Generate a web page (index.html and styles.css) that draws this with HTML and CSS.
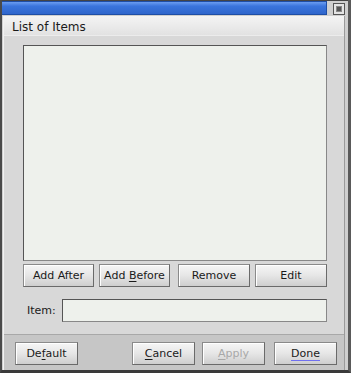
FILE: index.html
```html
<!DOCTYPE html>
<html>
<head>
<meta charset="utf-8">
<link rel="stylesheet" href="styles.css">
</head>
<body>
<div class="window">
  <div class="titlebar">
    <div class="title-blue"></div>
    <div class="close"><span class="close-dot"></span></div>
  </div>
  <div class="frame">
    <div class="header">List of Items</div>
    <div class="main">
      <div class="listbox"></div>
      <div class="btnrow">
        <button class="btn w72">Add After</button>
        <button class="btn w72">Add <u>B</u>efore</button>
        <button class="btn w73 ml8">Remove</button>
        <button class="btn w73">Edit</button>
      </div>
      <div class="itemrow">
        <span class="label">Item:</span>
        <div class="input"></div>
      </div>
    </div>
    <div class="bottombar">
      <button class="btn bb">De<u>f</u>ault</button>
      <div class="spacer"></div>
      <button class="btn bb"><u>C</u>ancel</button>
      <button class="btn bb disabled"><u>A</u>pply</button>
      <button class="btn bb done"><span class="done-text">Done</span></button>
    </div>
  </div>
</div>
</body>
</html>
```

FILE: styles.css
```css
html, body {
  margin: 0;
  padding: 0;
  background: #d4d4d4;
}
.window {
  width: 351px;
  height: 373px;
  box-sizing: border-box;
  background: #cfcfcf;
  border-left: 2px solid #4a4a4a;
  border-right: 3px solid #5a5a5a;
  border-bottom: 3px solid #3a3a3a;
  display: flex;
  flex-direction: column;
  font-family: "DejaVu Sans", sans-serif;
  font-size: 11px;
  color: #1a1a1a;
}
.titlebar {
  height: 16px;
  display: flex;
  align-items: flex-start;
  background: #cfcfcf;
  border-top: 1px solid #444;
  box-sizing: border-box;
}
.title-blue {
  flex: 1;
  height: 14px;
  box-sizing: border-box;
  background: linear-gradient(#6a9cf0, #3a74dc 35%, #2f66cc);
  border: 1px solid #1e4ea6;
  border-left: none;
}
.close {
  width: 12px;
  height: 12px;
  margin: 2px 3px 0 6px;
  box-sizing: border-box;
  border: 1px solid #555;
  background: #e4e4e4;
  display: flex;
  align-items: center;
  justify-content: center;
}
.close-dot {
  width: 4px;
  height: 4px;
  background: #555;
  border: 1px solid #888;
}
.frame {
  flex: 1;
  display: flex;
  flex-direction: column;
  margin-left: 1px;
  margin-right: 3px;
  border-left: 1px solid #f2f2f2;
  border-right: 1px solid #9a9a9a;
}
.header {
  height: 20px;
  box-sizing: border-box;
  padding: 4px 0 0 8px;
  line-height: 14px;
  background: linear-gradient(#f4f4f4, #e2e2e2);
  border-bottom: 1px solid #ececec;
  font-size: 12px;
}
.main {
  flex: 1;
  background: #d8d8d8;
  padding: 9px 17px 0 19px;
  display: flex;
  flex-direction: column;
}
.listbox {
  height: 216px;
  box-sizing: border-box;
  background: #eef1ec;
  border: 1px solid #555;
  border-right-color: #888;
  border-bottom-color: #888;
}
.btnrow {
  display: flex;
  gap: 5px;
  margin-top: 3px;
}
.btn {
  font-family: "DejaVu Sans", sans-serif;
  font-size: 11px;
  color: #1a1a1a;
  height: 23px;
  padding: 0;
  box-sizing: border-box;
  border: 1px solid #6a6a6a;
  border-top-color: #8a8a8a;
  border-left-color: #8a8a8a;
  background: linear-gradient(#f6f6f6, #e6e6e6 50%, #cecece);
  box-shadow: inset 1px 1px 0 #fff;
}
.btn u { text-decoration: underline; text-underline-offset: 2px; }
.w72 { width: 72px; }
.w73 { width: 73px; }
.ml8 { margin-left: 3px; }
.itemrow {
  display: flex;
  align-items: center;
  margin-top: 12px;
}
.label {
  width: 39px;
  padding-left: 4px;
  box-sizing: border-box;
}
.input {
  width: 265px;
  height: 23px;
  box-sizing: border-box;
  background: #eef1ec;
  border: 1px solid #555;
  border-right-color: #888;
  border-bottom-color: #888;
}
.bottombar {
  height: 36px;
  box-sizing: border-box;
  background: #c6c6c6;
  border-top: 1px solid #a8a8a8;
  display: flex;
  align-items: center;
  gap: 7px;
  padding: 1px 7px 0 11px;
}
.bb { width: 63px; }
.spacer { flex: 1; }
.bb.done { margin-left: 2px; }
.disabled { color: #a8a8a8; }
.done-text {
  border-bottom: 1px solid #7070f0;
}
```
